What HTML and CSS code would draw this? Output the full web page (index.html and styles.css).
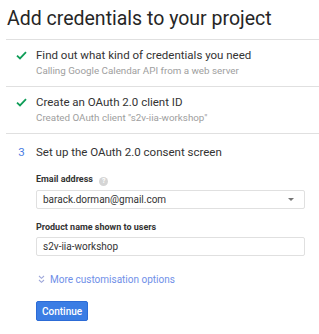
FILE: index.html
```html
<!DOCTYPE html>
<html lang="en">
<head>
    <meta charset="UTF-8">
    <title>Add credentials</title>
    <link rel="stylesheet" href="styles.css">
</head>
<body>

<div class="page">
    <h1 class="title">Add credentials to your project</h1>

    <!-- Step 1 -->
    <div class="step done">
        <span class="marker">
            <svg width="11" height="9" viewBox="0 0 11 9"><path d="M1 4.6 L4 7.4 L10 1.2" fill="none" stroke="#0f9d58" stroke-width="1.8"/></svg>
        </span>
        <div class="step-body">
            <div class="step-title">Find out what kind of credentials you need</div>
            <div class="step-sub">Calling Google Calendar API from a web server</div>
        </div>
    </div>

    <!-- Step 2 -->
    <div class="step done">
        <span class="marker">
            <svg width="11" height="9" viewBox="0 0 11 9"><path d="M1 4.6 L4 7.4 L10 1.2" fill="none" stroke="#0f9d58" stroke-width="1.8"/></svg>
        </span>
        <div class="step-body">
            <div class="step-title">Create an OAuth 2.0 client ID</div>
            <div class="step-sub">Created OAuth client "s2v-iia-workshop"</div>
        </div>
    </div>

    <!-- Step 3 -->
    <div class="step current">
        <span class="marker num">3</span>
        <div class="step-body">
            <div class="step-title">Set up the OAuth 2.0 consent screen</div>

            <label class="field-label first">Email address <span class="help">?</span></label>
            <div class="select">
                <span>barack.dorman@gmail.com</span>
                <span class="arrow"></span>
            </div>

            <label class="field-label">Product name shown to users</label>
            <div class="input">s2v-iia-workshop</div>

            <div class="more">
                <svg width="7" height="9" viewBox="0 0 7 9"><path d="M1 1 L3.5 3.3 L6 1 M1 5 L3.5 7.3 L6 5" fill="none" stroke="#9fa8da" stroke-width="1.1"/></svg>
                <span>More customisation options</span>
            </div>

            <button class="btn">Continue</button>
        </div>
    </div>
</div>

</body>
</html>
```

FILE: styles.css
```css
body {
    margin: 0;
    background: #fff;
    font-family: Roboto, "Liberation Sans", Arial, sans-serif;
    color: #212121;
}
.page {
    padding: 7px 0 0 6px;
}
.title {
    margin: 0 0 8px 1px;
    font-size: 19.5px;
    font-weight: 400;
    line-height: 24px;
    color: #262626;
}
.step {
    display: flex;
    border-top: 1px solid #e0e0e0;
    padding: 7px 0 8px 0;
}
.marker {
    width: 30px;
    flex: none;
    display: flex;
    justify-content: center;
    padding: 4px 0 0 1px;
    box-sizing: border-box;
}
.marker.num {
    padding-top: 0;
    font-size: 11.5px;
    line-height: 16px;
    color: #4a7de2;
}
.step-body {
    flex: 1;
    padding-right: 14px;
}
.step-title {
    font-size: 11.5px;
    line-height: 16px;
    color: #333;
}
.step-sub {
    font-size: 9.8px;
    line-height: 14px;
    margin-top: 1px;
    color: #9e9e9e;
}
.current {
    padding-top: 10px;
}
.field-label {
    display: block;
    margin-top: 12px;
    font-size: 9px;
    font-weight: 700;
    line-height: 12px;
    color: #333;
}
.field-label.first {
    margin-top: 13px;
}
.help {
    display: inline-block;
    width: 9px;
    height: 9px;
    margin-left: 4px;
    border-radius: 50%;
    background: #d5d5d5;
    color: #fff;
    font-size: 7px;
    line-height: 9px;
    text-align: center;
    vertical-align: -1px;
}
.select, .input {
    display: flex;
    align-items: center;
    justify-content: space-between;
    height: 17px;
    margin-top: 4px;
    padding: 0 6px;
    border: 1px solid #e0e0e0;
    border-radius: 2px;
    font-size: 10px;
    color: #333;
}
.arrow {
    width: 0;
    height: 0;
    border-left: 3px solid transparent;
    border-right: 3px solid transparent;
    border-top: 3px solid #757575;
    margin-right: 4px;
}
.more {
    display: flex;
    align-items: center;
    gap: 5px;
    height: 14px;
    margin-top: 16px;
    padding-left: 2px;
    font-size: 10px;
    color: #6f8fe8;
}
.btn {
    display: block;
    margin-top: 15px;
    height: 20px;
    padding: 0 5px;
    border: 1px solid #2c6bd6;
    border-radius: 2px;
    background: #3b7de4;
    color: #fff;
    font-family: inherit;
    font-size: 10px;
    font-weight: 500;
}
```
